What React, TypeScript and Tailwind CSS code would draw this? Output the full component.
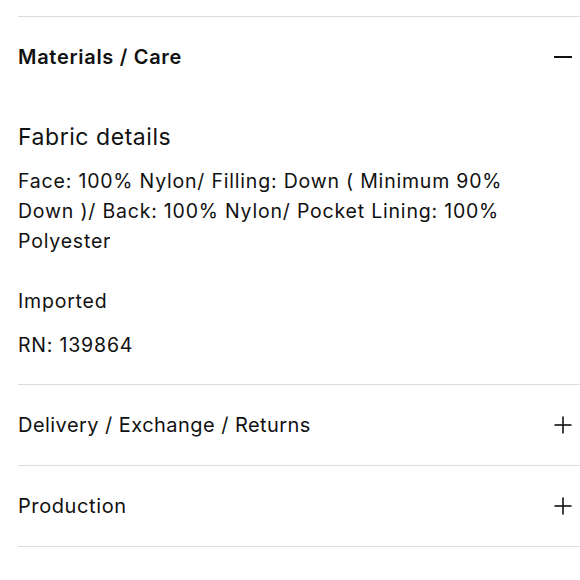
import React from "react";

function Minus() {
  return (
    <svg width="20" height="20" viewBox="0 0 20 20" className="block">
      <line x1="1" y1="10" x2="19" y2="10" stroke="#111" strokeWidth="2" />
    </svg>
  );
}

function Plus() {
  return (
    <svg width="20" height="20" viewBox="0 0 20 20" className="block">
      <line x1="1.5" y1="10" x2="18.5" y2="10" stroke="#111" strokeWidth="1.6" />
      <line x1="10" y1="1.5" x2="10" y2="18.5" stroke="#111" strokeWidth="1.6" />
    </svg>
  );
}

export default function App() {
  return (
    <div className="w-[580px] h-[580px] bg-white pt-[16px] pl-[18px] text-[#111] font-['Inter','Roboto',sans-serif] overflow-hidden">
      <section className="border-t border-[#dcdcdc]">
        <div className="h-20 flex items-center justify-between pr-[7px]">
          <span className="text-[20px] font-semibold tracking-[0.7px]">Materials / Care</span>
          <Minus />
        </div>
        <div className="pt-[25px] pb-[24px] tracking-[0.8px]">
          <p className="text-[23px] leading-[30px] tracking-[0.55px]">Fabric details</p>
          <p className="mt-[14px] text-[19.5px] leading-[30px] w-[510px]">
            Face: 100% Nylon/ Filling: Down ( Minimum 90% Down )/ Back: 100% Nylon/ Pocket Lining: 100% Polyester
          </p>
          <p className="mt-[30px] text-[19.5px] leading-[30px]">Imported</p>
          <p className="mt-[14px] text-[19.5px] leading-[30px]">RN: 139864</p>
        </div>
      </section>
      <section className="border-t border-[#dcdcdc]">
        <div className="h-20 flex items-center justify-between pr-[7px]">
          <span className="text-[20px] tracking-[0.45px]">Delivery / Exchange / Returns</span>
          <Plus />
        </div>
      </section>
      <section className="border-t border-[#dcdcdc]">
        <div className="h-20 flex items-center justify-between pr-[7px]">
          <span className="text-[20px] tracking-[0.6px]">Production</span>
          <Plus />
        </div>
      </section>
      <div className="border-t border-[#dcdcdc]" />
    </div>
  );
}
